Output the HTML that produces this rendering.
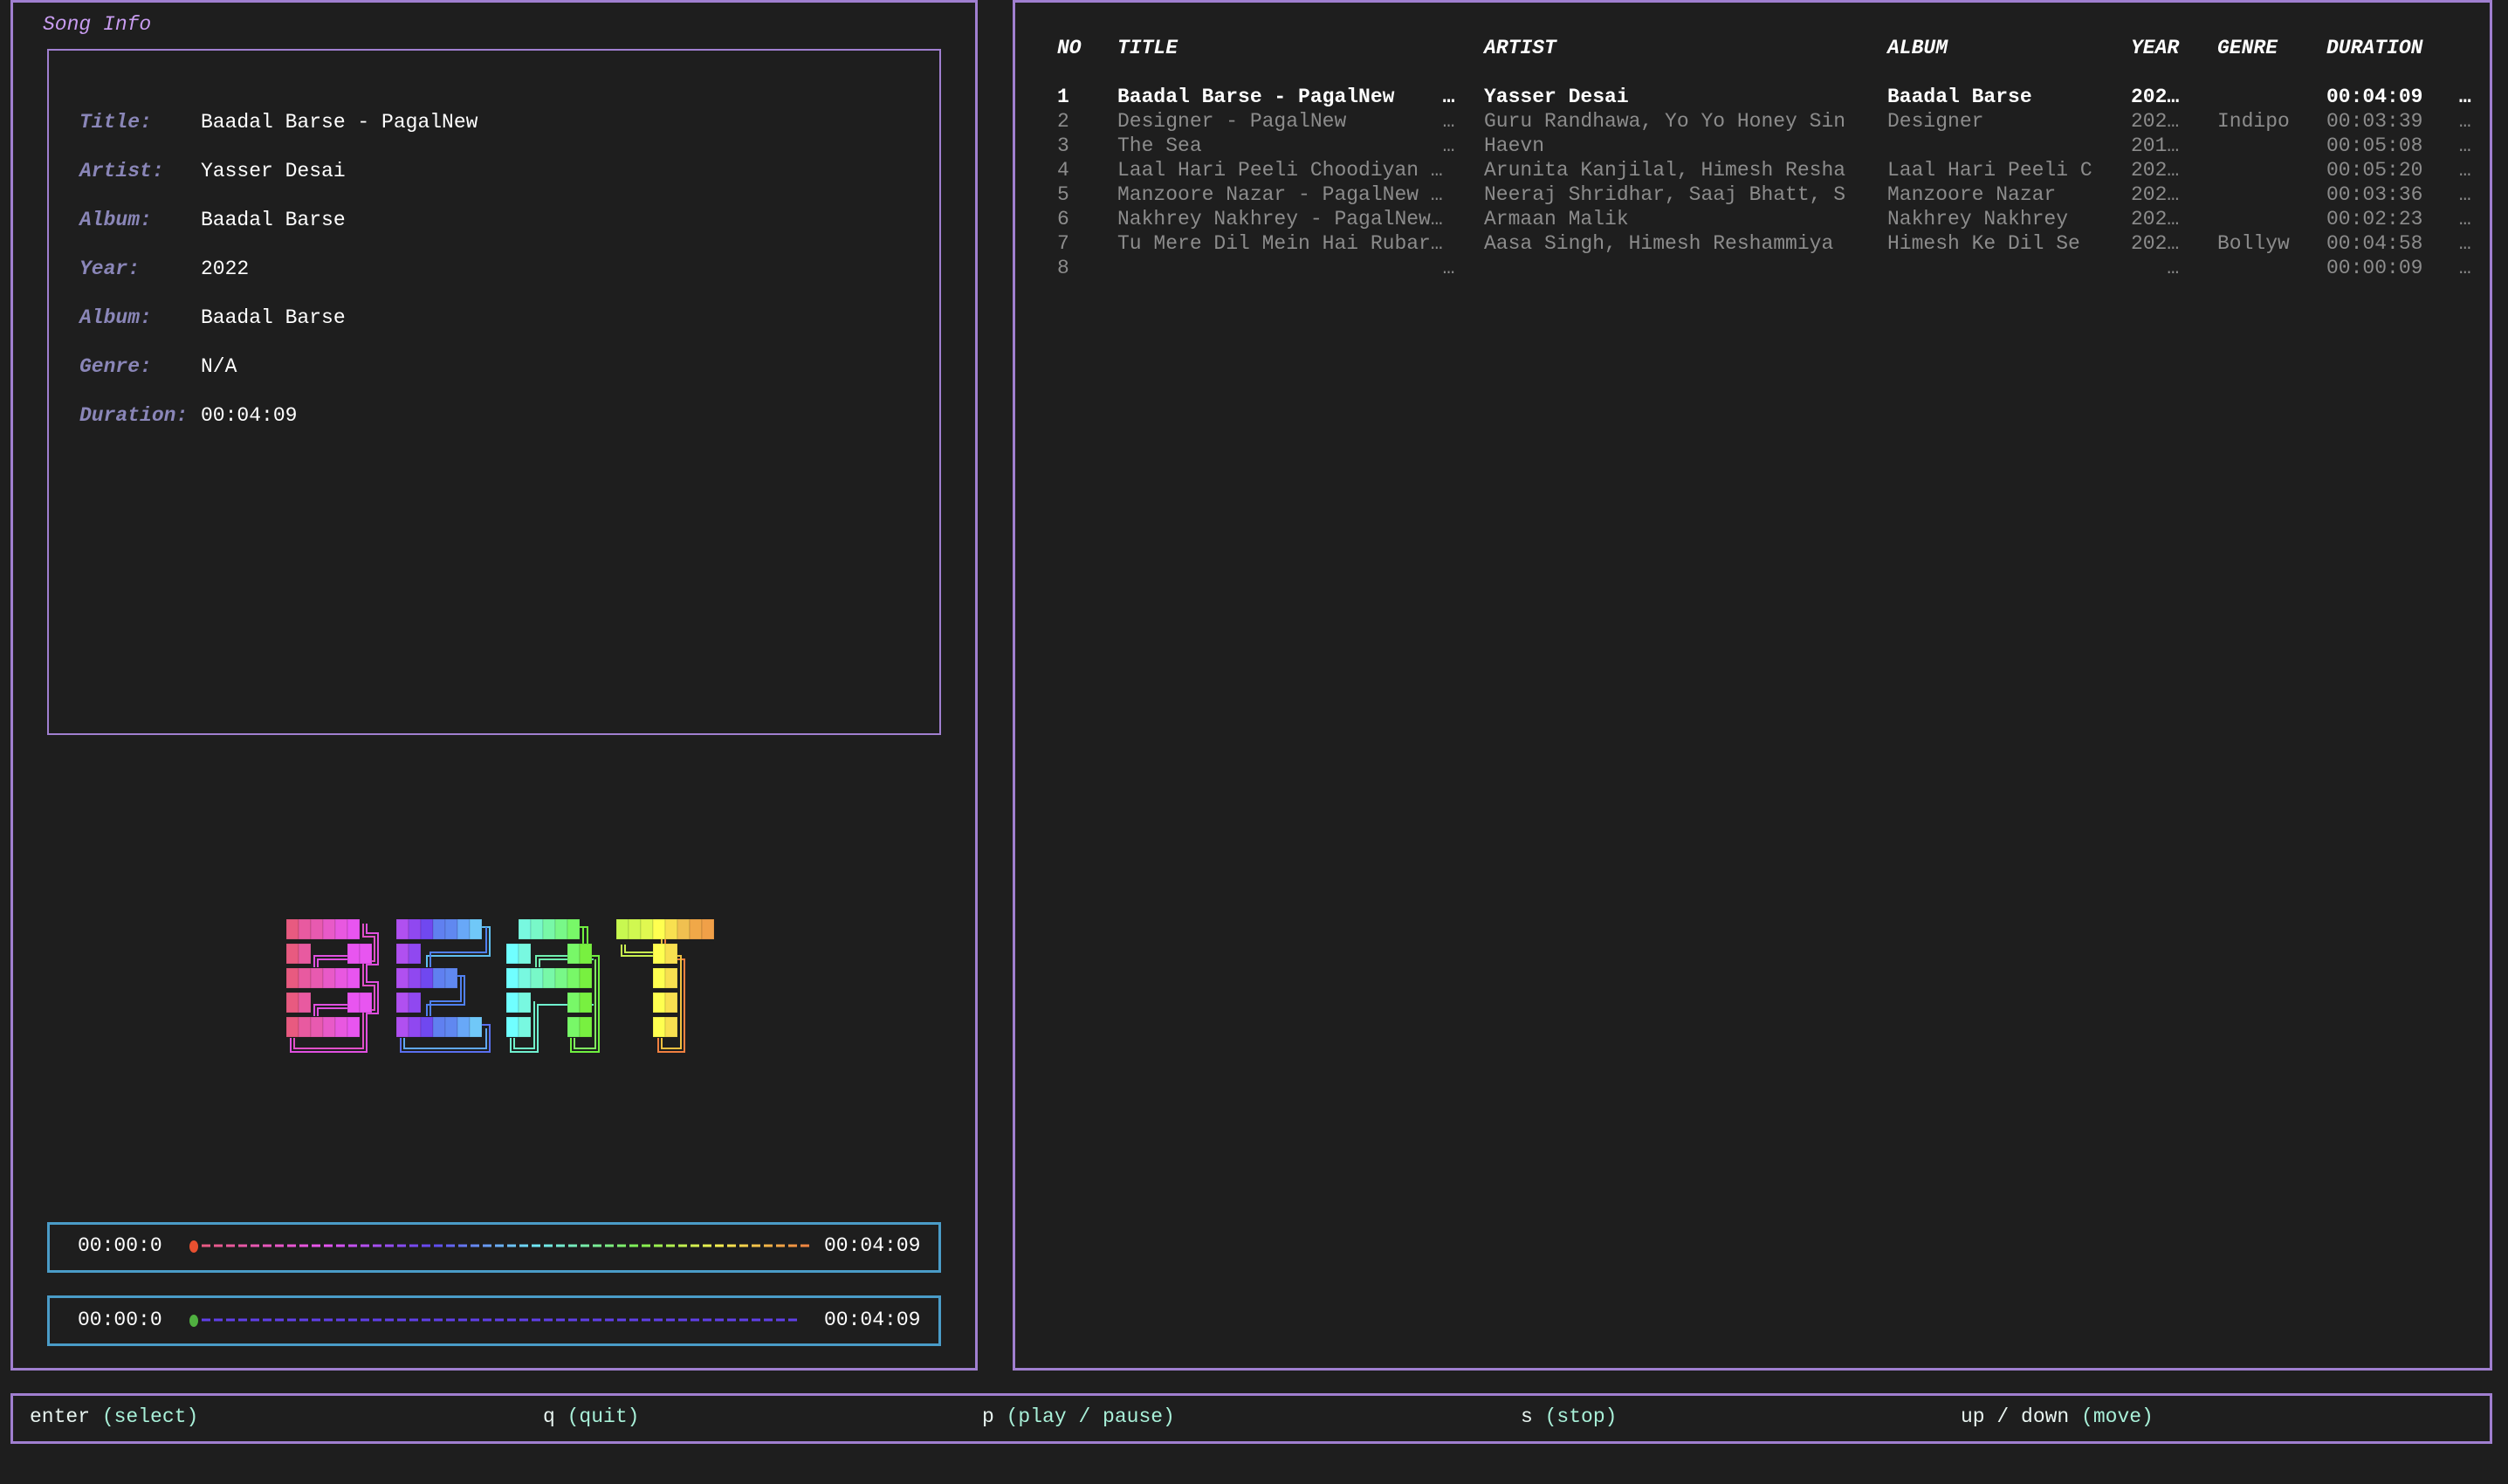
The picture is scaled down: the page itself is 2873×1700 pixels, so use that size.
<!DOCTYPE html>
<html><head><meta charset="utf-8"><style>
*{margin:0;padding:0;box-sizing:border-box}
body{width:2873px;height:1693px;background:#1e1e1e;position:relative;overflow:hidden;font-family:"Liberation Mono",monospace;font-size:23px;color:#fff}
.b{position:absolute;border:3px solid #a07fd0}
.t{position:absolute;white-space:pre;line-height:28px}
.lb{color:#8a86b8;font-weight:bold;font-style:italic}
.h{font-weight:bold;font-style:italic;color:#fff}
.g{color:#8c8c8c}
.w{color:#fff;font-weight:bold}
.k{color:#e8f4f0}.d{color:#a8f0d8}
.pb{position:absolute;border:3px solid #4a9cc8}
</style></head><body>
<div class="b" style="left:12px;top:0;width:1108px;height:1570px"></div>
<div class="t" style="left:49px;top:14px;color:#c89cf0;font-style:italic">Song Info</div>
<div class="b" style="left:54px;top:56px;width:1024px;height:786px;border-width:2px"></div>
<div class="t lb" style="left:91px;top:126px">Title:</div><div class="t" style="left:230px;top:126px">Baadal Barse - PagalNew</div>
<div class="t lb" style="left:91px;top:182px">Artist:</div><div class="t" style="left:230px;top:182px">Yasser Desai</div>
<div class="t lb" style="left:91px;top:238px">Album:</div><div class="t" style="left:230px;top:238px">Baadal Barse</div>
<div class="t lb" style="left:91px;top:294px">Year:</div><div class="t" style="left:230px;top:294px">2022</div>
<div class="t lb" style="left:91px;top:350px">Album:</div><div class="t" style="left:230px;top:350px">Baadal Barse</div>
<div class="t lb" style="left:91px;top:406px">Genre:</div><div class="t" style="left:230px;top:406px">N/A</div>
<div class="t lb" style="left:91px;top:462px">Duration:</div><div class="t" style="left:230px;top:462px">00:04:09</div>

<svg style="position:absolute;left:0;top:0" width="1120" height="1700">
<g id="logo" fill="none" stroke-width="2">
<path d="M333,1189 V1205 H420 V1161 H433 V1125 H420 V1105 H433 V1069 H420 V1058" stroke="#e050e0"/>
<path d="M337,1189 V1201 H416 V1157 H429 V1129 H416 V1101 H429 V1073 H416 V1058" stroke="#e050c8"/>
<path d="M360,1108 V1095 H425" stroke="#e050e0"/><path d="M364,1108 V1099 H425" stroke="#e050e0"/>
<path d="M360,1164 V1151 H425" stroke="#e050e0"/><path d="M364,1164 V1155 H425" stroke="#e050e0"/>
<path d="M459,1189 V1205 H561 V1174 H552" stroke="#5a70f0"/><path d="M463,1189 V1201 H557 V1178" stroke="#60a8f0"/>
<path d="M552,1062 H561 V1095 H489 V1108" stroke="#60c0f0"/><path d="M557,1062 V1091 H493 V1108" stroke="#5080f0"/>
<path d="M524,1118 H532 V1151 H489 V1164" stroke="#5080f0"/><path d="M528,1118 V1147 H493 V1164" stroke="#5080f0"/>
<path d="M585,1189 V1205 H616 V1151 H680" stroke="#70f0d0"/><path d="M589,1189 V1201 H612 V1147" stroke="#70f0c8"/>
<path d="M614,1108 V1095 H680" stroke="#70f0b0"/><path d="M618,1108 V1099 H680" stroke="#70f0b0"/>
<path d="M654,1189 V1205 H686 V1095 H678" stroke="#70f040"/><path d="M658,1189 V1201 H682 V1099" stroke="#80f060"/>
<path d="M664,1062 H673 V1082" stroke="#70f040"/><path d="M668,1062 V1082" stroke="#70f040"/>
<path d="M712,1082 V1095 H750" stroke="#c8f050"/><path d="M716,1082 V1091 H750" stroke="#c8f050"/>
<path d="M753,1062 H762 V1099 H784 V1205 H754 V1189" stroke="#f08040"/><path d="M758,1062 V1095 H780 V1201 H758 V1189" stroke="#f0c040"/>
</g>
<g id="blocks"></g>
</svg>
<script>
var cols={0:"#e85a80",1:"#e85aa0",2:"#e85ab0",3:"#e85ac8",4:"#e858e0",5:"#e855f0",6:"#e855f0",
9:"#b050f0",10:"#9048f0",11:"#7048f0",12:"#6080f0",13:"#6088f0",14:"#68a8f8",15:"#70c8f8",
18:"#70ffff",19:"#78f8e0",20:"#78f8c8",21:"#78f8a8",22:"#78f888",23:"#78f868",24:"#78f040",
27:"#c8f850",28:"#d0f850",29:"#e0f850",30:"#ffff50",31:"#f8e050",32:"#f0c050",33:"#f0a848",34:"#f0a048"};
var L=[[[0,5],[9,15],[19,23],[27,34]],[[0,1],[5,6],[9,10],[18,19],[23,24],[30,31]],[[0,5],[9,13],[18,24],[30,31]],[[0,1],[5,6],[9,10],[18,19],[23,24],[30,31]],[[0,5],[9,15],[18,19],[23,24],[30,31]]];
var s="";L.forEach(function(r,ri){r.forEach(function(sp){for(var c=sp[0];c<=sp[1];c++){s+='<rect x="'+(328+c*14)+'" y="'+(1053+ri*28)+'" width="14" height="23" fill="'+cols[c]+'" stroke="#00000022" stroke-width="1"/>';}})});
document.getElementById("blocks").innerHTML=s;
</script>

<div class="pb" style="left:54px;top:1400px;width:1024px;height:58px"></div>
<div class="t" style="left:89px;top:1413px">00:00:0</div>
<div class="t" style="left:944px;top:1413px">00:04:09</div>
<div class="pb" style="left:54px;top:1484px;width:1024px;height:58px"></div>
<div class="t" style="left:89px;top:1498px">00:00:0</div>
<div class="t" style="left:944px;top:1498px">00:04:09</div>
<svg style="position:absolute;left:0;top:0" width="1120" height="1600">
<defs><linearGradient id="gr" x1="231" x2="928" gradientUnits="userSpaceOnUse">
<stop offset="0" stop-color="#e85a80"/><stop offset=".2" stop-color="#e855f0"/><stop offset=".38" stop-color="#6048f0"/><stop offset=".55" stop-color="#70e8f8"/><stop offset=".72" stop-color="#80f050"/><stop offset=".85" stop-color="#f8f050"/><stop offset="1" stop-color="#f08040"/></linearGradient></defs>
<line x1="231" y1="1427" x2="928" y2="1427" stroke="url(#gr)" stroke-width="3" stroke-dasharray="10,4"/>
<ellipse cx="222" cy="1428" rx="5" ry="7" fill="#e85030"/>
<line x1="231" y1="1512" x2="915" y2="1512" stroke="#6040e8" stroke-width="3" stroke-dasharray="10,4"/>
<ellipse cx="222" cy="1513" rx="5" ry="7" fill="#50b040"/>
</svg>

<div class="b" style="left:1160px;top:0;width:1695px;height:1570px"></div>
<div class="t h" style="left:1211px;top:41px">NO</div>
<div class="t h" style="left:1280px;top:41px">TITLE</div>
<div class="t h" style="left:1700px;top:41px">ARTIST</div>
<div class="t h" style="left:2162px;top:41px">ALBUM</div>
<div class="t h" style="left:2441px;top:41px">YEAR</div>
<div class="t h" style="left:2540px;top:41px">GENRE</div>
<div class="t h" style="left:2665px;top:41px">DURATION</div>

<div class="t w" style="left:1211px;top:97px">1</div><div class="t w" style="left:1280px;top:97px">Baadal Barse - PagalNew    …</div><div class="t w" style="left:1700px;top:97px">Yasser Desai</div><div class="t w" style="left:2162px;top:97px">Baadal Barse</div><div class="t w" style="left:2441px;top:97px">202…</div><div class="t w" style="left:2665px;top:97px">00:04:09   …</div>
<div class="t g" style="left:1211px;top:125px">2</div><div class="t g" style="left:1280px;top:125px">Designer - PagalNew        …</div><div class="t g" style="left:1700px;top:125px">Guru Randhawa, Yo Yo Honey Sin</div><div class="t g" style="left:2162px;top:125px">Designer</div><div class="t g" style="left:2441px;top:125px">202…</div><div class="t g" style="left:2540px;top:125px">Indipo</div><div class="t g" style="left:2665px;top:125px">00:03:39   …</div>
<div class="t g" style="left:1211px;top:153px">3</div><div class="t g" style="left:1280px;top:153px">The Sea                    …</div><div class="t g" style="left:1700px;top:153px">Haevn</div><div class="t g" style="left:2441px;top:153px">201…</div><div class="t g" style="left:2665px;top:153px">00:05:08   …</div>
<div class="t g" style="left:1211px;top:181px">4</div><div class="t g" style="left:1280px;top:181px">Laal Hari Peeli Choodiyan …</div><div class="t g" style="left:1700px;top:181px">Arunita Kanjilal, Himesh Resha</div><div class="t g" style="left:2162px;top:181px">Laal Hari Peeli C</div><div class="t g" style="left:2441px;top:181px">202…</div><div class="t g" style="left:2665px;top:181px">00:05:20   …</div>
<div class="t g" style="left:1211px;top:209px">5</div><div class="t g" style="left:1280px;top:209px">Manzoore Nazar - PagalNew …</div><div class="t g" style="left:1700px;top:209px">Neeraj Shridhar, Saaj Bhatt, S</div><div class="t g" style="left:2162px;top:209px">Manzoore Nazar</div><div class="t g" style="left:2441px;top:209px">202…</div><div class="t g" style="left:2665px;top:209px">00:03:36   …</div>
<div class="t g" style="left:1211px;top:237px">6</div><div class="t g" style="left:1280px;top:237px">Nakhrey Nakhrey - PagalNew…</div><div class="t g" style="left:1700px;top:237px">Armaan Malik</div><div class="t g" style="left:2162px;top:237px">Nakhrey Nakhrey</div><div class="t g" style="left:2441px;top:237px">202…</div><div class="t g" style="left:2665px;top:237px">00:02:23   …</div>
<div class="t g" style="left:1211px;top:265px">7</div><div class="t g" style="left:1280px;top:265px">Tu Mere Dil Mein Hai Rubar…</div><div class="t g" style="left:1700px;top:265px">Aasa Singh, Himesh Reshammiya</div><div class="t g" style="left:2162px;top:265px">Himesh Ke Dil Se</div><div class="t g" style="left:2441px;top:265px">202…</div><div class="t g" style="left:2540px;top:265px">Bollyw</div><div class="t g" style="left:2665px;top:265px">00:04:58   …</div>
<div class="t g" style="left:1211px;top:293px">8</div><div class="t g" style="left:1280px;top:293px">                           …</div><div class="t g" style="left:2441px;top:293px">   …</div><div class="t g" style="left:2665px;top:293px">00:00:09   …</div>

<div class="b" style="left:12px;top:1596px;width:2843px;height:58px"></div>
<div class="t" style="left:34px;top:1609px"><span class="k">enter</span> <span class="d">(select)</span></div>
<div class="t" style="left:622px;top:1609px"><span class="k">q</span> <span class="d">(quit)</span></div>
<div class="t" style="left:1125px;top:1609px"><span class="k">p</span> <span class="d">(play / pause)</span></div>
<div class="t" style="left:1742px;top:1609px"><span class="k">s</span> <span class="d">(stop)</span></div>
<div class="t" style="left:2246px;top:1609px"><span class="k">up / down</span> <span class="d">(move)</span></div>
</body></html>
